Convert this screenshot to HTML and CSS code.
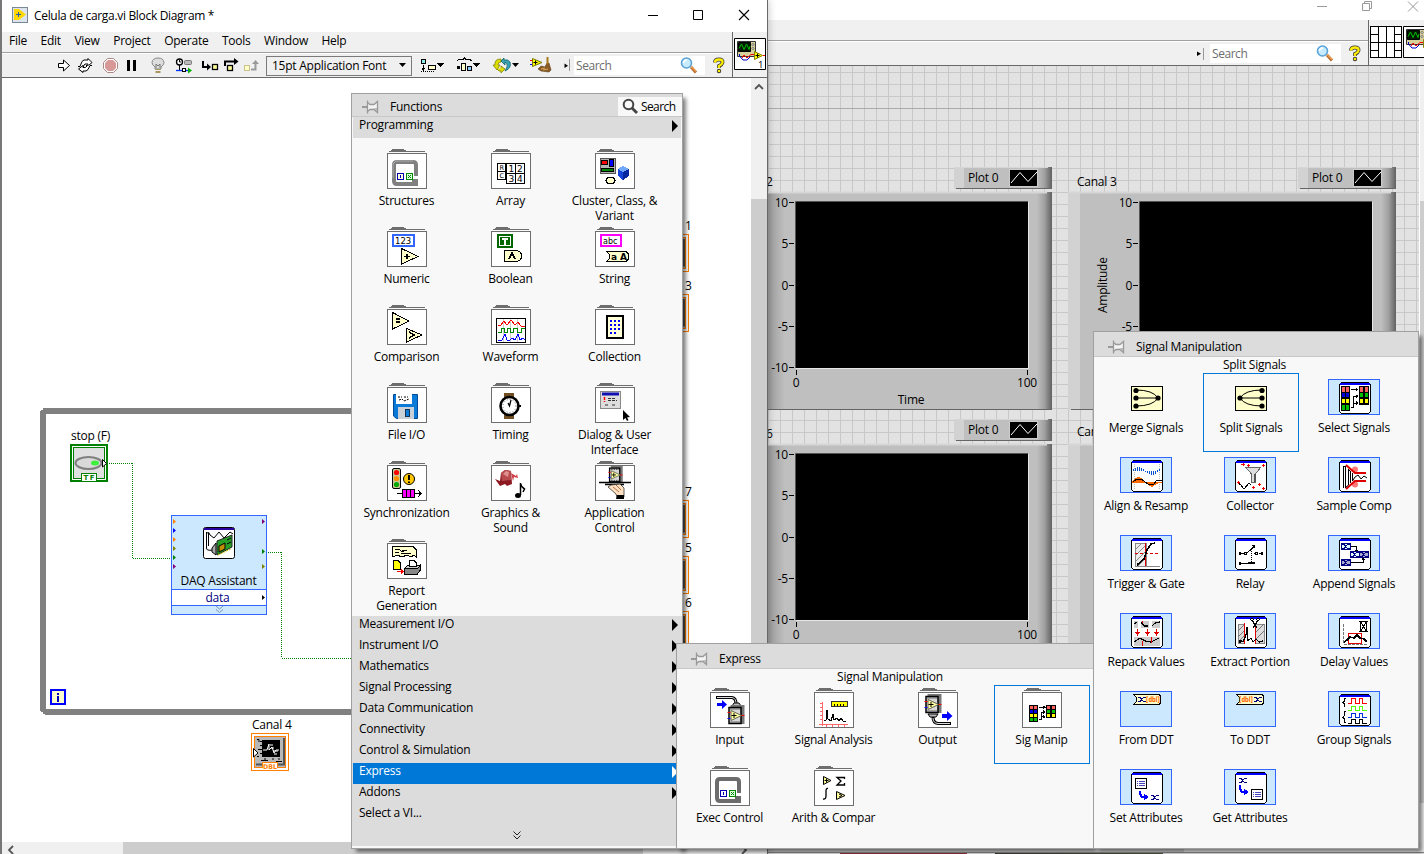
FILE: index.html
```html
<!DOCTYPE html>
<html lang="en">
<head>
<meta charset="utf-8">
<title>Celula de carga.vi Block Diagram</title>
<link rel="stylesheet" href="styles.css">
</head>
<body>
<svg class="defs" width="0" height="0">
  <defs>
    <linearGradient id="bevel" x1="0" x2="1" y1="0" y2="0"><stop offset="0" stop-color="#bfbfbf"/><stop offset=".5" stop-color="#a0a0a0"/><stop offset="1" stop-color="#606060"/></linearGradient>
    <symbol id="folder" viewBox="0 0 40 40"><path d="M4 2V1H5V0H17V1H19V2H38V3H2V2Z" fill="#6e6e6e"/><rect x=".5" y="4.500" width="39" height="35" fill="#fff" stroke="#6e6e6e"/></symbol>
    <symbol id="expframe" viewBox="0 0 52 36"><rect x=".5" y=".5" width="51" height="35" fill="#cce8ff" stroke="#3366ff"/></symbol>
    <symbol id="exp" viewBox="0 0 52 36"><rect x=".5" y=".5" width="51" height="35" fill="#cce8ff" stroke="#3366ff"/><path d="M13 3H41V4H42V5H43V33H42V34H41V35H13V34H12V33H11V5H12V4H13Z" fill="#000"/><path d="M12 6H42V33H41V34H13V33H12Z" fill="#fff"/><rect x="12" y="4" width="30" height="2" fill="#00f"/></symbol>
    <symbol id="pin" viewBox="0 0 17 14"><path d="M0 7H5" stroke="#999" stroke-width="2"/><path d="M5.500 .5V13.500M5.500 2.500L8 4.500H12L15.500 1.500V12.500L12 9.500H8L5.500 11.500" fill="#f4f4f4" stroke="#999" stroke-width="1.300"/><path d="M8 8.500H12L15 11V8Z" fill="#b5b5b5"/></symbol>
    <symbol id="vi" viewBox="0 0 32 32"><g stroke-linejoin="bevel"><rect x=".5" y=".5" width="31" height="31" fill="#fff" stroke="#000"/><path d="M3.500 3.500H21.500V18.500H3.500Z" fill="#d6d09c" stroke="#333"/><rect x="4.500" y="4.500" width="12" height="9" fill="#001800" stroke="#000"/><path d="M5 10.500L7.500 6L10 11.500L12.500 6L15 11.500L16 8" fill="none" stroke="#00c000"/><circle cx="19" cy="6.500" r="1" fill="#fff" stroke="#333" stroke-width=".6"/><circle cx="19" cy="10.500" r="1" fill="#fff" stroke="#333" stroke-width=".6"/><path d="M5.500 16V18L9 22H13L16 19" fill="none" stroke="#0000c0"/><path d="M8 20L10 17L13 20L17 16.500H20" fill="none" stroke="#f00"/><path d="M20.500 13.500L28.500 17.500L20.500 21.500Z" fill="#ff0" stroke="#8a8000"/><path d="M23.500 15.500V19.500M21.500 17.500H25.500" stroke="#000"/><path d="M29 17.500H31" stroke="#f00"/></g></symbol>
    <symbol id="mag" viewBox="0 0 18 18"><path d="M11 10L16 15.500" stroke="#b46a30" stroke-width="3"/><path d="M11 9.500L16 14.500" stroke="#f0a050" stroke-width="1.200"/><circle cx="6.500" cy="6" r="5" fill="#c8ecff" stroke="#5aa2d6" stroke-width="1.600"/><path d="M3.500 6Q4 3 7 3" fill="none" stroke="#fff" stroke-width="1.500"/></symbol>
    <symbol id="loop" viewBox="0 0 26 26"><path d="M24 16V5Q24 2 21 2H5Q2 2 2 5V21Q2 24 5 24H24V21H20" fill="none" stroke="#808080" stroke-width="4"/><path d="M1 18V4L4 1H21" fill="none" stroke="#aaa"/><rect x="5.500" y="13.500" width="6" height="6" fill="#ffd" stroke="#0000b0"/><path d="M8.500 15V18" stroke="#0000b0"/><rect x="14.500" y="13.500" width="6" height="6" fill="#dfd" stroke="#080"/><path d="M16 15L19 18M19 15L16 18" stroke="#080"/></symbol>
    <symbol id="loop-flat" viewBox="0 0 26 26"><path d="M24 16V5Q24 2 21 2H5Q2 2 2 5V21Q2 24 5 24H24V21H20" fill="none" stroke="#6c6c6c" stroke-width="4"/><rect x="5.500" y="13.500" width="6" height="6" fill="#fff" stroke="#0000b0"/><path d="M8.500 15V18" stroke="#0000b0"/><rect x="14.500" y="13.500" width="6" height="6" fill="#dfd" stroke="#080"/><path d="M16 15L19 18M19 15L16 18" stroke="#080"/></symbol>
    <symbol id="ctl" viewBox="0 0 17 20"><rect x="3" y="0" width="14" height="19" fill="#777"/><rect x="1.500" y="2.500" width="12" height="16" fill="#d7d7d7" stroke="#000" stroke-width="1.500"/><path d="M3 4H13M3 17H13" stroke="#000" stroke-dasharray="1 1"/><path d="M3.500 5.500L14 10.500L3.500 15.500Z" fill="#ffffa0" stroke="#665"/><path d="M6.500 8V13M4 10.500H9" stroke="#000"/><path d="M0 7.500H3M14 10.500H17" stroke="#f00"/><path d="M0 13.500H3" stroke="#00f"/></symbol>
    <symbol id="swatches" viewBox="0 0 28 18" preserveAspectRatio="none"><path d="M0 0H9V18H0ZM18 0H28V14H18Z" fill="#000"/><path d="M1 1H4V4H1ZM5 1H8V4H5ZM19 1H22V4H19ZM24 1H27V4H24Z" fill="#ff6060"/><path d="M1 5H4V8H1ZM5 5H8V8H5Z" fill="#00d"/><path d="M1 9.500H4V12.500H1ZM5 9.500H8V12.500H5ZM19 9.500H22V12.500H19ZM24 9.500H27V12.500H24Z" fill="#ff0"/><path d="M1 14H4V17H1ZM5 14H8V17H5ZM19 5H22V8H19ZM24 5H27V8H24Z" fill="#00c000"/><path d="M10 2.500H15M10 15.500H12.500V7.500H15M12.500 12.500H15" fill="none" stroke="#000"/><path d="M15 .8L17.500 2.500L15 4.200ZM15 5.800L17.500 7.500L15 9.200ZM15 10.800L17.500 12.500L15 14.200Z"/></symbol>
    <symbol id="xx" viewBox="0 0 8 5"><path d="M0 .5H2L5.500 4.500H8M0 4.500H2L5.500 .5H8" stroke="#000080" fill="none"/></symbol>
    <symbol id="dbl" viewBox="0 0 38 38"><rect width="38" height="38" fill="#fff"/><rect x=".5" y=".5" width="37" height="37" fill="none" stroke="#ff8000"/><rect x="3.500" y="3.500" width="31" height="31" fill="#b8b8b8" stroke="#ff8000"/><path d="M33 5V31.500H5" fill="none" stroke="#555" stroke-width="2"/><rect x="11" y="7" width="18" height="17" fill="#000"/><path d="M12 17H16L18 11V17L21 14L23 20L25 17H28M19 12H22M20 15H23M23 21H26M22 18H27" fill="none" stroke="#fff" stroke-linejoin="bevel"/><path d="M6 6.500H8V9M9 8.500H11M9 12.500H11M7 16.500H11M6 23.500H8M9 20.500H11M10 27.500H17M14 25V27M22 25V27M25 28.500H31M28 25V27" stroke="#000" fill="none"/><path d="M2.500 15.500L7 20L2.500 24Z" fill="#fff" stroke="#000"/><path d="M11.500 36V29.500H26.500V36Z" fill="#fff"/><path d="M11.500 35V29.500H26.500V35" fill="none" stroke="#ff8000"/><text x="12" y="36.300" class="micro" font-size="6.500" fill="#ff8000" font-weight="700" textLength="14" lengthAdjust="spacingAndGlyphs">DBL</text></symbol>
  </defs>
</svg>

<!-- Front panel window -->
<section class="win front">
  <header class="front-title">
    <svg width="110" height="20" viewBox="1314 0 110 20"><path d="M1317 6.500H1327M1362.500 3.500H1369.500V10.500H1362.500ZM1364.500 3V1.500H1371.500V8.500H1370M1408 1.500L1418 11.500M1418 1.500L1408 11.500" fill="none" stroke="#999"/></svg>
  </header>
  <div class="front-bars">
    <div class="bars-main">
      <div class="front-menu"></div>
      <div class="front-tools">
        <svg width="15" height="22" viewBox="0 0 15 22"><path d="M2 8.500V13L6 10.700Z"/><path d="M8.500 5V17" stroke="#999"/></svg>
        <div class="search"><span>Search</span><svg width="18" height="18"><use href="#mag"/></svg></div>
        <svg width="27" height="22" viewBox="705 55 27 22"><use href="#help-mark"/></svg>
      </div>
    </div>
    <div class="front-icons">
      <svg width="32" height="32" class="px"><path d="M.5.5H31.500V31.500H.5ZM8.500 0V32M16.500 0V32M24.500 0V32M0 16.500H32M0 8.500H8M24 8.500H32M0 24.500H8M24 24.500H32" fill="#fff" stroke="#000"/></svg>
      <svg width="32" height="32"><use href="#vi"/></svg>
    </div>
  </div>
  <svg class="panel" width="657" height="776" viewBox="767 66 657 776">
    <defs>
      <pattern id="grid" width="12" height="12" patternUnits="userSpaceOnUse"><rect width="12" height="12" fill="#e2e2e2"/><path d="M.5 0V12M0 .5H12" stroke="#c8c8c8"/></pattern>
      <g id="legend"><rect width="98" height="22" fill="#bfbfbf"/><rect width="10" height="22" fill="#d2d2d2"/><rect x="83" width="15" height="22" fill="url(#bevel)"/><path d="M2 21.500H98M97.500 0V22" stroke="#666"/><path d="M0 .5H94" stroke="#d6d6d6"/><rect x="55.500" y="2.500" width="28" height="17" fill="#000" stroke="#ccc"/><path d="M57 16L66 5.500L74 14.500L83 5" fill="none" stroke="#fff"/><text x="14" y="15">Plot 0</text></g>
      <g id="chart"><rect width="232" height="166" fill="#000"/><path d="M-.5 166V-.5H232" fill="none" stroke="#555"/><path d="M0 166.500H232.500V0" fill="none" stroke="#e6e6e6"/><path d="M-7 .5H-2M-7 41.500H-2M-7 83.500H-2M-7 124.500H-2M-7 165.500H-2M.5 168V173M231.500 168V173" stroke="#000"/>
        <g text-anchor="end"><text x="-8" y="5">10</text><text x="-8" y="46">5</text><text x="-8" y="88">0</text><text x="-8" y="129">-5</text><text x="-8" y="170">-10</text></g><g text-anchor="middle"><text x="0" y="185">0</text><text x="231" y="185">100</text><text x="115" y="202">Time</text></g></g>
      <g id="left-graph"><rect width="285" height="218" fill="#bfbfbf"/><rect width="18" height="218" fill="url(#leftshade)"/><rect x="270" width="15" height="218" fill="url(#bevel)"/><path d="M0 .5H280" stroke="#d6d6d6" stroke-width="2"/><path d="M0 217.500H285M284.500 0V218" stroke="#666"/></g>
      <g id="right-graph"><rect width="328" height="218" fill="#bfbfbf"/><rect width="12" height="218" fill="#d2d2d2"/><rect x="313" width="15" height="218" fill="url(#bevel)"/><path d="M0 .5H323" stroke="#d6d6d6" stroke-width="2"/><path d="M3 217.500H328M327.500 0V218" stroke="#666"/></g>
      <linearGradient id="leftshade"><stop offset="0" stop-color="#999"/><stop offset="1" stop-color="#bfbfbf"/></linearGradient>
    </defs>
    <rect x="767" y="66" width="652" height="776" fill="url(#grid)"/>
    <path d="M767 108.500H1419" stroke="#aaa"/>
    <rect x="1419" y="66" width="5" height="776" fill="#f0f0f0"/><path d="M1419.500 66V842" stroke="#fff"/><rect x="1420" y="201" width="4" height="602" fill="#cdcdcd"/>
    <use href="#left-graph" x="767" y="192"/><use href="#left-graph" x="767" y="444"/>
    <use href="#right-graph" x="1068" y="192"/><use href="#right-graph" x="1068" y="444"/>
    <use href="#legend" x="954" y="167"/><use href="#legend" x="954" y="419"/><use href="#legend" x="1298" y="167"/>
    <use href="#chart" x="796" y="202"/><use href="#chart" x="796" y="454"/><use href="#chart" x="1140" y="202"/>
    <text x="766" y="186">2</text><text x="766" y="438">6</text>
    <text x="1077" y="186">Canal 3</text><text x="1077" y="436">Can</text>
    <text transform="translate(1107 313) rotate(-90)">Amplitude</text>
  </svg>
  <div class="front-foot"><i></i></div>
  <div class="under"></div>
</section>

<!-- Block diagram window -->
<section class="win block">
  <header class="title">
    <svg width="16" height="16" viewBox="0 0 16 16"><rect x=".5" y=".5" width="15" height="15" fill="#dbe4ec" stroke="#7b8794"/><path d="M2 2H7L14 7.500L7 13H2Z" fill="#ffd800"/><path d="M6.500 5V10M4 7.500H9" stroke="#2458a8"/></svg>
    <h1>Celula de carga.vi Block Diagram *</h1>
    <svg class="winctl" width="120" height="31" viewBox="640 0 120 31"><path d="M648 15.500H658M693.500 10.500H702.500V19.500H693.500Z" fill="none" stroke="#000"/><path d="M739 10L749 20M749 10L739 20" stroke="#000" stroke-width="1.100"/></svg>
  </header>
  <div class="bars">
    <div class="bars-main">
      <nav class="menu"><span>File</span><span>Edit</span><span>View</span><span>Project</span><span>Operate</span><span>Tools</span><span>Window</span><span>Help</span></nav>
      <div class="tools">
        <svg width="20" height="23" viewBox="54 54 20 23"><path d="M58.500 63.500H63.500V60L69.500 65.500L63.500 71V67.500H58.500Z" fill="#fff" stroke="#000"/></svg>
        <svg width="24" height="23" viewBox="74 54 24 23"><path d="M78 66.500H80L82 61.500L84 60H88V58.500L92 62.500L88 66V64H85L83 66.500H84" fill="#fff" stroke="#000" stroke-linejoin="bevel"/><path d="M92 65.500H90L88 69.500L86 71H83V72.500L78.500 69L83 65.500V67.500H85.500L87.500 65.500H86" fill="#fff" stroke="#000" stroke-linejoin="bevel"/></svg>
        <svg width="24" height="23" viewBox="98 54 24 23"><path d="M107.500 58.500H113.500L117.500 62.500V68.500L113.500 72.500H107.500L103.500 68.500V62.500Z" fill="#fff" stroke="#a88"/><path d="M108 60H113L116 63V68L113 71H108L105 68V63Z" fill="#d89898"/></svg>
        <svg width="20" height="23" viewBox="122 54 20 23"><path d="M127 60H130V71H127ZM133 60H136V71H133Z"/></svg>
        <svg width="28" height="23" viewBox="142 54 28 23"><path d="M155 67Q152 65 152 62.500Q152.500 58 158 58Q163.500 58 164 62.500Q164 65 161 67V69H155Z" fill="#ddd" stroke="#888"/><path d="M156 68V64L158 66L160 64V68" fill="none" stroke="#777"/><path d="M155.500 69H160.500V73H155.500Z" fill="#a89860"/><path d="M155 70.500H161" stroke="#eee"/></svg>
        <svg width="26" height="23" viewBox="170 54 26 23"><circle cx="179.500" cy="62" r="3" fill="#fff" stroke="#000" stroke-width="1.300"/><path d="M179.500 60V62H181M179.500 65V70" fill="none" stroke="#000"/><rect x="184.500" y="60.500" width="7" height="4" rx="1" fill="#bbb" stroke="#777"/><path d="M176 70.500H190" stroke="#03f" stroke-width="1.300"/><rect x="182.500" y="68.500" width="3" height="3" fill="#fff" stroke="#000"/><path d="M188 67.500L192 70.500L188 73.500Z" fill="#00b000"/></svg>
        <svg width="25" height="23" viewBox="196 54 25 23"><path d="M203 61V67H208" fill="none" stroke="#000" stroke-width="2"/><path d="M207 63.500L211 67L207 70.500Z"/><rect x="212.500" y="64.500" width="5" height="5" fill="#ff9" stroke="#000" stroke-width="1.300"/></svg>
        <svg width="21" height="23" viewBox="221 54 21 23"><path d="M225 66V61.500H235" fill="none" stroke="#000" stroke-width="2"/><path d="M234 58L238.500 61.500L234 65Z"/><rect x="227.500" y="65.500" width="5" height="5" fill="#ff9" stroke="#000" stroke-width="1.300"/></svg>
        <svg width="24" height="23" viewBox="242 54 24 23"><rect x="244.500" y="65.500" width="5" height="5" fill="#ffffc8" stroke="#ccc18e"/><path d="M251 69.500H255.500V63" fill="none" stroke="#999" stroke-width="2"/><path d="M252 64L255.500 60L259 64Z" fill="#999"/></svg>
        <div class="combo"><span>15pt Application Font</span><svg width="9" height="5"><path d="M1 0H8L4.500 4Z"/></svg></div>
        <svg width="38" height="23" viewBox="412 54 38 23" class="px"><rect x="421.500" y="59.500" width="4" height="4" fill="#8ee" stroke="#000"/><path d="M423.500 65V71M422 68L423.500 70L425 68" fill="none" stroke="#000"/><path d="M421 71.500H435" stroke="#000" stroke-dasharray="1 1"/><rect x="428.500" y="65.500" width="7" height="4" fill="#ffc" stroke="#000"/><path d="M437 63H444L440.500 67Z"/></svg>
        <svg width="36" height="23" viewBox="450 54 36 23" class="px"><path d="M457 61L459 59.500H463L464.500 58L466 59.500H470L472 61" fill="none" stroke="#000"/><path d="M457 66H460V69H457Z"/><rect x="461.500" y="63.500" width="4" height="7" fill="#ffc" stroke="#000"/><rect x="467.500" y="66.500" width="4" height="4" fill="#8cf" stroke="#000"/><path d="M473 63H480L476.500 67Z"/></svg>
        <svg width="38" height="23" viewBox="486 54 38 23"><path d="M501 59Q494 59 495 65L493 65L497 70L500 65H498Q498 62 501 62Z" fill="#dd0" stroke="#770" stroke-width=".7"/><path d="M497 69Q499 72 501 71V73L505 69L501 66V68" fill="#dd0" stroke="#770" stroke-width=".7"/><path d="M504 58L501 61L505 65V62Q508 63 507 67L505 71Q512 68 510 62Q508 59 504 60Z" fill="#3aa6b8" stroke="#055" stroke-width=".7"/><path d="M512 63H519L515.500 67Z"/></svg>
        <svg width="32" height="23" viewBox="524 54 32 23"><path d="M530 60.500H534" stroke="#f00"/><path d="M530 64.500H534" stroke="#00f"/><path d="M538 69L541 66L545 67L547 63H549L551 70L549 72L541 71Z" fill="#8a5c24" stroke="#5b3b12" stroke-width=".6"/><path d="M541 69L545 68M543 70L548 69" stroke="#d8a860"/><path d="M547.500 57V64" stroke="#a87818" stroke-width="2"/><path d="M532.500 58.500L542 62.500L532.500 66.500Z" fill="#ff0" stroke="#770"/><path d="M535.500 60.500V64.500M533.500 62.500H537.500" stroke="#000"/></svg>
        <svg width="18" height="23" viewBox="556 54 18 23"><path d="M564.500 63.500V68L568 65.700Z"/><path d="M569.500 59V71" stroke="#999"/></svg>
        <div class="search"><span>Search</span><svg width="18" height="18"><use href="#mag"/></svg></div>
        <svg width="27" height="23" viewBox="705 54 27 23"><g id="help-mark"><path d="M715 62.500Q715 59.500 719 59.500Q723 59.500 722.500 62.500Q722 64.500 719 66V68" fill="none" stroke="#333" stroke-width="3.800"/><circle cx="719" cy="71" r="2.200" fill="#333"/><path d="M715 62.500Q715 59.500 719 59.500Q723 59.500 722.500 62.500Q722 64.500 719 66V68" fill="none" stroke="#ffee00" stroke-width="2.400"/><circle cx="719" cy="71" r="1.300" fill="#ffee00"/></g></svg>
      </div>
    </div>
    <div class="vi-icon"><svg width="32" height="32"><use href="#vi"/><text x="24" y="29.500" font-size="9.500">1</text></svg></div>
  </div>
  <div class="work">
    <svg class="diagram" width="749" height="764" viewBox="2 78 749 764">
      <path d="M43 411H640M43 410V712M43 712H640" fill="none" stroke="#808080" stroke-width="6"/>
      <path d="M40 408H43V409H41V411H40ZM40 715H45V714H42V713H41V711H40Z" fill="#fff"/>
      <text x="71" y="440">stop (F)</text>
      <g class="px"><rect x="71" y="445" width="36" height="36" fill="#fff" stroke="#008000" stroke-width="2"/><rect x="73.500" y="447.500" width="31" height="31" fill="#e0e0e0" stroke="#008000"/></g>
      <ellipse cx="88.500" cy="463" rx="13" ry="6" fill="#d9d9d9" stroke="#808080" stroke-width="2"/><ellipse cx="95" cy="463" rx="4" ry="2.500" fill="#3cf03c"/><path d="M102.500 459.500L106.500 463.500L102.500 467Z" fill="#fff" stroke="#000"/>
      <rect x="81.500" y="473.500" width="15" height="8" fill="#fff" stroke="#008000"/><text x="83.500" y="480" class="micro" font-size="7" fill="#008000" font-weight="700" textLength="11">TF</text>
      <g class="px" fill="none" stroke="#008000" stroke-dasharray="1 1"><path d="M109 463.500H132M132.500 463V558M133 558.500H171M268 552.500H281M281.500 552V658M282 658.500H351"/></g>
      <g class="px"><rect x="171.500" y="515.500" width="95" height="99" fill="#cce8ff" stroke="#3366ff"/><rect x="171.500" y="589.500" width="95" height="16" fill="#fff" stroke="#3366ff"/></g>
      <path d="M173 519V524L176 521.500Z M173 537V542L176 539.500Z" fill="#ff8000"/><path d="M173 528V533L176 530.500Z" fill="#00f"/><path d="M173 546V551L176 548.500ZM262 564V569L265 566.500Z" fill="#808000"/><path d="M173 555V560L176 557.500ZM262 549V554L265 551.500Z" fill="#008000"/><path d="M173 564V569L176 566.500ZM262 519V524L265 521.500Z" fill="#800080"/><path d="M262 595V600L265 597.500Z"/>
      <rect x="203.500" y="527.500" width="31" height="31" rx="2" fill="#fff" stroke="#000"/><rect x="204" y="528" width="30" height="2" fill="#2a00a0"/><path d="M206.500 532V548Q206 551 213 550M208.500 533V546" fill="none" stroke="#000"/><path d="M207 533Q209 531 210 535L214 538L219 532L224 538L230 532L233 534" fill="none" stroke="#000"/><path d="M217 541L232 535V547L217 555Z" fill="#28a028" stroke="#222"/><path d="M212 548L216 543V555L212 552Z" fill="#aaa" stroke="#000"/><path d="M219 546L225 543V549L219 552Z" fill="#c09000" stroke="#000"/><path d="M227 540L231 538M227 544L231 542" stroke="#000"/><path d="M218 555L231 549" stroke="#cc0" stroke-dasharray="2 1"/>
      <g text-anchor="middle"><text x="218.500" y="585">DAQ Assistant</text><text x="217.500" y="602" fill="#000080">data</text></g>
      <path d="M216 606L219.500 609L223 606M216 609.500L219.500 612.500L223 609.500" fill="none" stroke="#7b95b4"/>
      <rect x="51" y="690" width="14" height="14" fill="#ffc" stroke="#00f" stroke-width="2"/><path d="M57 693H59V695H57ZM57 696H59V702H57Z" fill="#0000c0"/>
      <text x="252" y="729">Canal 4</text>
      <use href="#dbl" x="251" y="733" width="38" height="38"/>
      <g><use href="#dbl" x="651" y="234" width="38" height="38"/><use href="#dbl" x="651" y="294" width="38" height="38"/><use href="#dbl" x="651" y="500" width="38" height="38"/><use href="#dbl" x="651" y="556" width="38" height="38"/><use href="#dbl" x="651" y="611" width="38" height="38"/></g>
      <text x="685" y="230">1</text><text x="685" y="290">3</text><text x="685" y="496">7</text><text x="685" y="552">5</text><text x="685" y="607">6</text>
    </svg>
    <div class="vscroll"><svg width="16" height="18"><path d="M4 11L8 7L12 11" fill="none" stroke="#555" stroke-width="1.800"/></svg><i></i></div>
  </div>
  <div class="hscroll"><svg width="121" height="12"><path d="M11 4L7 8L11 12" fill="none" stroke="#555" stroke-width="1.800"/></svg><i></i><svg width="124" height="12"><path d="M99 4L103 8L99 12" fill="none" stroke="#555" stroke-width="1.800"/></svg></div>
</section>

<!-- Functions palette -->
<section class="pal functions">
  <header><svg width="17" height="14"><use href="#pin"/></svg><span>Functions</span><button><svg width="17" height="17" viewBox="0 0 17 17"><circle cx="6.500" cy="6.500" r="4.800" fill="none" stroke="#444" stroke-width="2"/><path d="M10 10L15 15" stroke="#444" stroke-width="2.800"/></svg>Search</button></header>
  <div class="cat"><span>Programming</span><i></i></div>
  <div class="tiles">
    <div class="tile"><svg width="40" height="40"><use href="#folder"/><use href="#loop" x="5" y="11" width="26" height="26"/></svg><span>Structures</span></div>
    <div class="tile"><svg width="40" height="40" class="px"><use href="#folder"/><path d="M6.500 14.500H14.500V30.500H6.500ZM6 22.500H14M15.500 14.500H33.500V34.500H15.500ZM24.500 14V34M15 24.500H33" fill="#fff" stroke="#000"/><g class="micro"><text x="8.500" y="21" font-size="6.500">R</text><text x="8.500" y="29" font-size="6.500">C</text><text x="17.500" y="23" font-size="9">1</text><text x="26" y="23" font-size="9">2</text><text x="17.500" y="33" font-size="9">3</text><text x="26" y="33" font-size="9">4</text></g></svg><span>Array</span></div>
    <div class="tile"><svg width="40" height="40" class="px"><use href="#folder"/><rect x="5.500" y="9.500" width="15" height="15" fill="#b4b4b4" stroke="#555"/><rect x="6.500" y="11.500" width="6" height="4" fill="#f00" stroke="#000"/><rect x="14.500" y="10.500" width="4" height="7" fill="#00f" stroke="#000"/><rect x="6.500" y="19.500" width="12" height="3" fill="#080" stroke="#000"/><path d="M23 20L28 17L34 20V27L28 31L23 27Z" fill="#1745d8"/><path d="M23 20L28 17L34 20L28 23Z" fill="#70a8ff"/><path d="M28 23L34 20V27L28 31Z" fill="#0828a0"/><path d="M10 31.500H21" stroke="#000"/><path d="M13 28.500H18L19.500 30V33L18 34.500H13L11.500 33V30Z" fill="#ffc" stroke="#000"/></svg><span>Cluster, Class, &amp;<br>Variant</span></div>

    <div class="tile"><svg width="40" height="40" class="px"><use href="#folder"/><rect x="6" y="8" width="21" height="11" fill="#fff" stroke="#36f" stroke-width="2"/><text class="micro" x="8" y="17" font-size="8.500" letter-spacing=".5">123</text><path d="M14.500 21.500L31 29.500L14.500 37Z" fill="#ffc" stroke="#000"/><path d="M20 27V32M17 29.500H23" stroke="#000" stroke-width="1.500"/></svg><span>Numeric</span></div>
    <div class="tile"><svg width="40" height="40" class="px"><use href="#folder"/><rect x="6" y="7" width="16" height="14" fill="#060"/><rect x="8.500" y="9.500" width="11" height="9" fill="#060" stroke="#fff"/><path d="M11 12H17M14 12V18" stroke="#fff" stroke-width="2"/><path d="M13.500 23.500H25Q30.500 24 30.500 29Q30.500 34 25 34.500H13.500Z" fill="#ffc" stroke="#000"/><path d="M18 32L21 26L24 32" fill="none" stroke="#000" stroke-width="1.700"/></svg><span>Boolean</span></div>
    <div class="tile"><svg width="40" height="40" class="px"><use href="#folder"/><rect x="6" y="8" width="20" height="11" fill="#fff" stroke="#f0f" stroke-width="2"/><text class="micro" x="8" y="17" font-size="8">abc</text><path d="M12 24.500H31L33.500 27V32L31 34.500H12L14 32V27Z" fill="#ffc" stroke="#000"/><text class="micro" x="16" y="33" font-size="9" font-weight="700" textLength="16">aA</text></svg><span>String</span></div>

    <div class="tile"><svg width="40" height="40" class="px"><use href="#folder"/><path d="M5.500 7.500L22 16L5.500 24Z" fill="#ffc" stroke="#000"/><path d="M9 14H13M9 17H13" stroke="#000" stroke-width="1.500"/><path d="M19.500 23.500L35 30L19.500 37Z" fill="#ffc" stroke="#000"/><path d="M22 27L27 30L22 33" fill="none" stroke="#000" stroke-width="1.500"/></svg><span>Comparison</span></div>
    <div class="tile"><svg width="40" height="40" class="px"><use href="#folder"/><rect x="5.500" y="13.500" width="29" height="24" fill="#fff" stroke="#000"/><path d="M12.500 14V37M19.500 14V37M26.500 14V37" stroke="#ccc"/><path d="M7 21L10 20L13 16L16 20L20 15L24 20L27 17L30 21H34" fill="none" stroke="#f00"/><path d="M7 27.500H10V23.500H13V27.500H16V23.500H19V27.500H22V23.500H26V27.500H30V23.500H34" fill="none" stroke="#080"/><path d="M7 35H11L13 31L14 29L16 35H19L21 33L24 35L27 29L29 35L32 33L34 35" fill="none" stroke="#00f" stroke-linejoin="bevel"/></svg><span>Waveform</span></div>
    <div class="tile"><svg width="40" height="40" class="px"><use href="#folder"/><rect x="12" y="11" width="16" height="22" fill="#ffffd8" stroke="#000" stroke-width="2"/><path d="M16 15V30M20 15V30M24 15V26" stroke="#00f" stroke-width="2" stroke-dasharray="2 2"/></svg><span>Collection</span></div>

    <div class="tile"><svg width="40" height="40"><use href="#folder"/><path d="M6.500 11.500H30.500V35.500H9.500L6.500 33Z" fill="#0a7ad8" stroke="#004a98"/><rect x="9" y="11" width="16" height="10" fill="#fff"/><path d="M11 14H15M17 14H21M12 17L15 16L17 18L22 16" stroke="#000" stroke-dasharray="2 1" fill="none"/><rect x="11" y="24" width="16" height="12" fill="#c9d0d8"/><rect x="18.500" y="26.500" width="4" height="7" fill="#0a7ad8" stroke="#135"/></svg><span>File I/O</span></div>
    <div class="tile"><svg width="40" height="40"><use href="#folder"/><path d="M13 10H23V36H13Z" fill="#704d22"/><circle cx="18.500" cy="23" r="9" fill="#fff" stroke="#000" stroke-width="2.600"/><circle cx="18.500" cy="23" r="6.500" fill="none" stroke="#777" stroke-dasharray="1 2"/><path d="M20 17L18.500 23L17 20" fill="none" stroke="#000" stroke-width="1.300"/><path d="M28 23H30" stroke="#000" stroke-width="2"/></svg><span>Timing</span></div>
    <div class="tile"><svg width="40" height="40"><use href="#folder"/><rect x="5.500" y="8.500" width="20" height="17" fill="#ddd" stroke="#888"/><path d="M7 11H24" stroke="#1010b0" stroke-width="3"/><path d="M9.500 14V17M9.500 18V19" stroke="#f00" stroke-width="1.500"/><path d="M13 15.500H21M13 17.500H22M10 22H14M17 22H21" stroke="#333" stroke-dasharray="3 1"/><path d="M28 27V37L30.500 35L32 38L33.500 37L32 34.500L35 34Z"/></svg><span>Dialog &amp; User<br>Interface</span></div>

    <div class="tile"><svg width="40" height="40"><use href="#folder"/><rect x="5.500" y="7.500" width="8" height="20" rx="1.500" fill="#c8c896" stroke="#000"/><circle cx="9.500" cy="11.500" r="2.600" fill="#f00"/><circle cx="9.500" cy="17.500" r="2.600" fill="#ff9000"/><circle cx="9.500" cy="23.500" r="2.600" fill="#00a800"/><circle cx="22" cy="18" r="5.500" fill="#ffc800" stroke="#000"/><path d="M22 14V19M22 20.500V22" stroke="#000" stroke-width="2"/><g class="px"><path d="M10 32.500H34M31 29L34 32.500L31 36" fill="none" stroke="#000"/><rect x="15.500" y="28.500" width="12" height="8" fill="#f0f" stroke="#000"/><path d="M19.500 28V37M23.500 28V37" stroke="#000"/></g></svg><span>Synchronization</span></div>
    <div class="tile"><svg width="40" height="40"><use href="#folder"/><path d="M4 18L9 20L10 12L14 9L20 10L21 23L16 25L14 23L9 25Z" fill="#8c1820"/><path d="M10 12L14 9L20 10L20 19L11 20Z" fill="#b84a4e"/><path d="M12 13L15 10L18 11L17 16Z" fill="#e09090"/><path d="M20 12L25 15L26 13L27 17L23 16L22 20Z" fill="#d04048"/><path d="M29.500 34V22Q30 26 33.500 28L32 31" fill="none" stroke="#000" stroke-width="1.500"/><ellipse cx="27" cy="34.500" rx="3" ry="2.500"/></svg><span>Graphics &amp;<br>Sound</span></div>
    <div class="tile"><svg width="40" height="40"><use href="#folder"/><use href="#ctl" x="12" y="5" width="17" height="17"/><path d="M4 21.500H36M10 23.500H29" stroke="#000" stroke-width="1.300"/><path d="M16 24L13 26L21 33L22 36H29V27L25 23Z" fill="#ffe0c0" stroke="#333" stroke-width=".8"/><path d="M21 24L26 29M18 26L24 31" stroke="#a05030" stroke-width=".8"/><path d="M22 34H29V38H21Z"/></svg><span>Application<br>Control</span></div>

    <div class="tile"><svg width="40" height="40" class="px"><use href="#folder"/><path d="M5.500 7.500H26L29.500 11V18L27 16.500L24 17.500L20 16.500L15 17.500L10 16.500L5.500 17.500Z" fill="#ffc" stroke="#000"/><path d="M8 10.500H13M8 13.500H12M13 11.500L17 13M15 11.500H20M14 14.500H24" stroke="#000"/><path d="M6.500 21.500H11L13.500 24V30H6.500Z" fill="#ff0" stroke="#000"/><path d="M10 32.500H16M14 30.500L16 32.500L14 34.500" fill="none" stroke="#f00"/><path d="M17.500 29.500H30L33.500 26V31L30 35.500H17.500Z" fill="#888" stroke="#000"/><path d="M17.500 29.500L21 26H34L30 30Z" fill="#ccc" stroke="#000"/><path d="M22.500 27V21.500H27L29.500 24V27Z" fill="#fff" stroke="#000"/></svg><span>Report<br>Generation</span></div>
  </div>
  <div class="cats">
    <div class="cat"><span>Measurement I/O</span><i></i></div><div class="cat"><span>Instrument I/O</span><i></i></div><div class="cat"><span>Mathematics</span><i></i></div><div class="cat"><span>Signal Processing</span><i></i></div><div class="cat"><span>Data Communication</span><i></i></div><div class="cat"><span>Connectivity</span><i></i></div><div class="cat"><span>Control &amp; Simulation</span><i></i></div><div class="cat on"><span>Express</span><i></i></div><div class="cat"><span>Addons</span><i></i></div><div class="cat"><span>Select a VI...</span></div>
    <svg class="more" width="8" height="9"><path d="M.5 .5L4 4L7.500 .5M.5 4.500L4 8L7.500 4.500" fill="none" stroke="#222"/></svg>
  </div>
</section>

<!-- Express palette -->
<section class="pal express">
  <header><svg width="17" height="14"><use href="#pin"/></svg><span>Express</span></header>
  <p class="hint">Signal Manipulation</p>
  <div class="tiles four">
    <div class="tile"><svg width="40" height="40"><use href="#folder"/><path d="M6 9.500H22Q26 10 26 16" fill="none" stroke="#000" stroke-width="3"/><path d="M7 9.500H22Q26 10 26 16" fill="none" stroke="#ddd"/><path d="M22 18L24 15H29L31 18Z" fill="#bbb" stroke="#000"/><path d="M7 15H12V12L17 16.500L12 21V18H7Z" fill="#00f"/><use href="#ctl" x="17" y="17" width="18" height="20"/></svg><span>Input</span></div>
    <div class="tile"><svg width="40" height="40" class="px"><use href="#folder"/><path d="M8.500 14V38M5 36.500H34" stroke="#f66"/><path d="M6 15.500H8M6 19.500H8M6 23.500H8M6 27.500H8M6 31.500H8M12.500 37V39M18.500 37V39M24.500 37V39M30.500 37V39" stroke="#f66"/><rect x="17.500" y="13.500" width="16" height="5" fill="#ff0" stroke="#333"/><path d="M20.500 16V18M23.500 16V18M26.500 16V18M29.500 16V18" stroke="#000"/><path d="M10 33L12 32L13 22L14 31L17 33L19 26L20 32L23 30L25 33L27 30L29 33H32" fill="none" stroke="#000" stroke-linejoin="bevel"/></svg><span>Signal Analysis</span></div>
    <div class="tile"><svg width="40" height="40"><use href="#folder"/><use href="#ctl" x="6" y="6" width="18" height="20"/><path d="M10 26H20L18 29H12Z" fill="#bbb" stroke="#000"/><path d="M15 29Q15 35 20 35.500H33" fill="none" stroke="#000" stroke-width="3"/><path d="M15 30Q15 35 20 35.500H32" fill="none" stroke="#ddd"/><path d="M24 26H29V23L34.500 28L29 33V30H24Z" fill="#00f"/></svg><span>Output</span></div>
    <div class="tile sel"><svg width="40" height="40" class="px"><use href="#folder"/><use href="#swatches" x="7" y="17" width="27" height="17"/></svg><span>Sig Manip</span></div>
    <div class="tile"><svg width="40" height="40"><use href="#folder"/><use href="#loop-flat" x="5" y="11" width="26" height="26"/></svg><span>Exec Control</span></div>
    <div class="tile"><svg width="40" height="40"><use href="#folder"/><path d="M9.500 10.500L17 14.500L9.500 18.500ZM22.500 25.500L31 29.500L22.500 33.500Z" fill="#ff9" stroke="#000"/><path d="M12.500 12.500V16.500M10.500 14.500H14.500M25 28L28 29.500L25 31" fill="none" stroke="#000"/><path d="M30.500 13V11.500H23L27 15L23 19H30.500V17M14 22.500Q12 22 12 25V30Q12 33.500 9 33" fill="none" stroke="#000" stroke-width="1.300"/></svg><span>Arith &amp; Compar</span></div>
  </div>
</section>

<!-- Signal manipulation palette -->
<section class="pal sigman">
  <header><svg width="17" height="14"><use href="#pin"/></svg><span>Signal Manipulation</span></header>
  <p class="hint">Split Signals</p>
  <div class="tiles xp">
    <div class="tile"><svg width="52" height="36"><rect x="11.500" y="7.500" width="31" height="24" fill="#ffc" stroke="#000"/><path d="M16 11Q33 11 38 19Q33 27 16 27M16 19H38" fill="none" stroke="#000"/><circle cx="16" cy="11.500" r="2.600"/><circle cx="16" cy="19" r="2.600"/><circle cx="16" cy="27" r="2.600"/><circle cx="38" cy="19" r="2.600"/></svg><span>Merge Signals</span></div>
    <div class="tile sel"><svg width="52" height="36"><rect x="11.500" y="7.500" width="31" height="24" fill="#ffc" stroke="#000"/><path d="M38 11Q21 11 16 19Q21 27 38 27M38 19H16" fill="none" stroke="#000"/><circle cx="38" cy="11.500" r="2.600"/><circle cx="38" cy="19" r="2.600"/><circle cx="38" cy="27" r="2.600"/><circle cx="16" cy="19" r="2.600"/></svg><span>Split Signals</span></div>
    <div class="tile"><svg width="52" height="36" class="px"><use href="#exp"/><use href="#swatches" x="13" y="7" width="28" height="25"/></svg><span>Select Signals</span></div>

    <div class="tile"><svg width="52" height="36" class="px"><use href="#exp"/><path d="M14.500 7V33M39.500 7V33" stroke="#bbb" stroke-dasharray="1 1"/><path d="M13.500 12V14M15.500 11V14M17.500 10V14M19.500 10V14M21.500 11V14M23.500 12V14M25.500 14V15M27.500 14V16M29.500 14V17M31.500 14V18M33.500 14V18M35.500 14V17M37.500 13V15M39.500 12V14" stroke="#0050d0"/><path d="M12 25L15 21L18 20L21 21L25 24.500ZM25 25H41L35 28L32 30L28 28Z" fill="#ff6a00"/><path d="M12 25H42" stroke="#ff6a00"/><path d="M13 25L17 22H21L28 27H34L37 23H42" fill="none" stroke="#000"/></svg><span>Align &amp; Resamp</span></div>
    <div class="tile"><svg width="52" height="36" class="px"><use href="#exp"/><path d="M22 10.500H36.500L31.500 17V25H27.500V17Z" fill="#ddd" stroke="#666"/><path d="M31 17V25" stroke="#555" stroke-width="2"/><path d="M13 25L17 28L20 32L25 26L27 28" fill="none" stroke="#000"/><path d="M17 7.500H21M19.500 6V9M23 8.500H26M24.500 7V10M38 8.500H41M39.500 7V10M34 27.500H37M35.500 26V29M38 31.500H41M39.500 30V33M13 25.500H16M14.500 24V27M28 30.500H31M29.500 29V32" stroke="#e00"/></svg><span>Collector</span></div>
    <div class="tile"><svg width="52" height="36"><use href="#exp"/><circle cx="27" cy="12.500" r="3" fill="#f77"/><circle cx="27" cy="27.500" r="3" fill="#f77"/><path d="M18 8L27 16H38M18 32L27 24H38" fill="none" stroke="#d00" stroke-width="2"/><path d="M15.500 9V31M17.500 9V31M20.500 12V28M22.500 14V26M15.500 9.500H17.500M17.500 30.500L20.500 28M20.500 12.500L22.500 14.500M24.500 16V24L27 20L30 18L33 22L36 19L39 21" fill="none" stroke="#000" stroke-linejoin="bevel"/></svg><span>Sample Comp</span></div>

    <div class="tile"><svg width="52" height="36" class="px"><use href="#exp"/><rect x="15" y="8" width="11" height="23" fill="#eee" stroke="#888"/><path d="M15 15L22 8M15 21L26 10M15 27L26 16M18 31L26 22M15 31.500H40" stroke="#888"/><path d="M25.500 8V31" stroke="#d00" stroke-width="1.300"/><path d="M15 18.500H40" stroke="#d00" stroke-dasharray="3 2"/><path d="M17 30L24 24L27 15L31 9L35 8" fill="none" stroke="#000" stroke-width="1.600"/></svg><span>Trigger &amp; Gate</span></div>
    <div class="tile"><svg width="52" height="36" class="px"><use href="#exp"/><path d="M15 18.500H20M23 18L31 11M35 18.500H38M15 28.500H31" stroke="#000"/><path d="M27.500 16V27" stroke="#000" stroke-dasharray="1 1"/><path d="M27 10H31V14Z"/><circle cx="21.500" cy="18.500" r="1.500" fill="#fff" stroke="#000"/><circle cx="32.500" cy="18.500" r="1.500" fill="#fff" stroke="#000"/><path d="M15 17H17V20H15ZM37 17H39V20H37ZM15 27H17V30H15ZM24 27H31V29H24Z"/></svg><span>Relay</span></div>
    <div class="tile"><svg width="52" height="36" class="px"><use href="#exp"/><path d="M23 11.500H28.500V17M23 27.500H35.500V23M27 15L28.500 17L30 15M34 25L35.500 23L37 25" fill="none" stroke="#000"/><g fill="#dff" stroke="#000080"><rect x="13.500" y="8.500" width="9" height="6"/><rect x="22.500" y="16.500" width="9" height="6"/><rect x="31.500" y="16.500" width="9" height="6" fill="#aac"/><rect x="13.500" y="24.500" width="9" height="6" fill="#aac"/></g><use href="#xx" x="14" y="9" width="8" height="5"/><use href="#xx" x="23" y="17" width="8" height="5"/><use href="#xx" x="32" y="17" width="8" height="5"/><use href="#xx" x="14" y="25" width="8" height="5"/></svg><span>Append Signals</span></div>

    <div class="tile"><svg width="52" height="36" class="px"><use href="#exp"/><path d="M14 8H18V15H14ZM21 8H29V15H21ZM32 8H40V15H32ZM14 24H40V33H14Z" fill="#ccc"/><path d="M14 11L17 9M21 9L24 13H28M32 13L35 10L40 9M14 29L20 25L25 28L31 29L39 25" fill="none" stroke="#000" stroke-width="1.300"/><path d="M17.500 16V22M27.500 16V22M36.500 16V22M22.500 8V10M22.500 28V33M31.500 24V30" stroke="#d00"/><path d="M15 19H20L17.500 23ZM25 19H30L27.500 23ZM34 19H39L36.500 23Z" fill="#d00"/></svg><span>Repack Values</span></div>
    <div class="tile"><svg width="52" height="36" class="px"><use href="#exp"/><path d="M14 11H20V30H14ZM31 11H40V30H31Z" fill="#ddd" stroke="#888"/><path d="M14 18L20 12M14 24L20 18M14 29L20 23M31 20L40 11M31 27L40 18" stroke="#777"/><path d="M20.500 10V31M31.500 10V31" stroke="#d00"/><path d="M16 30V27L19 29L22 22L23 14L24 28L27 25L29 29L32 26L35 29L39 28" fill="none" stroke="#000" stroke-width="1.300" stroke-linejoin="bevel"/><path d="M28 7L33 15M34 7L29 15" stroke="#000" stroke-width="1.200"/><circle cx="28" cy="6.500" r="1.300" fill="#fff" stroke="#000"/><circle cx="34" cy="6.500" r="1.300" fill="#fff" stroke="#000"/></svg><span>Extract Portion</span></div>
    <div class="tile"><svg width="52" height="36" class="px"><use href="#exp"/><path d="M15.500 11V31H40" fill="none" stroke="#777" stroke-dasharray="3 1"/><rect x="20.500" y="20.500" width="13" height="10" fill="#fff" stroke="#d00"/><path d="M16 29L19 27L22 24L26 25L29 22L32 25L36 26L39 29" fill="none" stroke="#000" stroke-width="1.600"/><rect x="32.500" y="8.500" width="6" height="10" fill="#fff" stroke="#000"/><path d="M33 9L38 18M38 9L33 18M31 8.500H40M31 18.500H40" stroke="#000"/></svg><span>Delay Values</span></div>

    <div class="tile"><svg width="52" height="36" class="px"><use href="#expframe"/><path d="M14 3.500H39L40.500 5V12L39 13.500H14L16 11V6Z" fill="#ffc" stroke="#000"/><use href="#xx" x="18" y="6" width="8" height="5"/><text class="micro" x="26" y="11" font-size="7.500" fill="#f60" font-weight="700" textLength="14" lengthAdjust="spacingAndGlyphs">[dbl]</text></svg><span>From DDT</span></div>
    <div class="tile"><svg width="52" height="36" class="px"><use href="#expframe"/><path d="M13 3.500H38L39.500 5V12L38 13.500H13L15 11V6Z" fill="#ffc" stroke="#000"/><use href="#xx" x="30" y="6" width="8" height="5"/><text class="micro" x="15" y="11" font-size="7.500" fill="#f60" font-weight="700" textLength="14" lengthAdjust="spacingAndGlyphs">[dbl]</text></svg><span>To DDT</span></div>
    <div class="tile"><svg width="52" height="36" class="px"><use href="#exp"/><path d="M18 7.500H16.500V10L15 11.500L16.500 13V16M18 20.500H16.500V24L15 26.500L16.500 28V31.500H18" fill="none" stroke="#000"/><g fill="none"><path d="M20 12.500H23.500V7.500H27.500V12.500H31.500V7.500H34.500V12.500H39" stroke="#f00"/><path d="M20 19.500H23.500V15.500H27.500V19.500H31.500V15.500H34.500V19.500H39" stroke="#5f0"/><path d="M20 26.500H23.500V22.500H27.500V26.500H31.500V22.500H34.500V26.500H39" stroke="#03d"/><path d="M20 32.500H23.500V28.500H27.500V32.500H31.500V28.500H34.500V32.500H39" stroke="#000"/></g></svg><span>Group Signals</span></div>

    <div class="tile"><svg width="52" height="36" class="px"><use href="#exp"/><rect x="15.500" y="9.500" width="11" height="10" fill="#fff" stroke="#000"/><path d="M17 12.500H25M17 14.500H25M17 16.500H25" stroke="#44b" stroke-dasharray="1 1 6 1"/><path d="M20 22V25L22 28H25" fill="none" stroke="#00f" stroke-width="2"/><path d="M24 24.500L29 28L24 31.500Z" fill="#00f"/><use href="#xx" x="31" y="26" width="8" height="5"/></svg><span>Set Attributes</span></div>
    <div class="tile"><svg width="52" height="36" class="px"><use href="#exp"/><rect x="27.500" y="20.500" width="11" height="10" fill="#fff" stroke="#000"/><path d="M29 23.500H37M29 25.500H37M29 27.500H37" stroke="#44b" stroke-dasharray="1 1 6 1"/><path d="M16 16V20L18 23H21" fill="none" stroke="#00f" stroke-width="2"/><path d="M20 19.500L25 23L20 26.500Z" fill="#00f"/><use href="#xx" x="15" y="9" width="8" height="5"/></svg><span>Get Attributes</span></div>
  </div>
</section>
</body>
</html>
```
FILE: styles.css
```css
* { box-sizing: border-box; }
html, body { margin: 0; height: 100%; }
body { position: relative; overflow: hidden; width: 1424px; height: 854px; background: #fff; color: #000; font: 12px/15px "Open Sans", "Noto Sans", sans-serif; letter-spacing: -.24px; }
svg { display: block; flex: none; }
svg text { stroke: none; }
.defs { position: absolute; }
.px { shape-rendering: crispEdges; }
.micro { font-family: "DejaVu Sans", sans-serif; letter-spacing: 0; }
.win { position: absolute; top: 0; height: 854px; display: flex; flex-direction: column; }

/* front panel */
.front { left: 767px; width: 657px; background: #f0f0f0; overflow: hidden; }
.front-title { height: 20px; background: #fff; display: flex; justify-content: flex-end; }
.front-bars { height: 46px; display: flex; border-bottom: 1px solid #696969; }
.bars-main { flex: 1; display: flex; flex-direction: column; }
.front-menu { height: 21px; border-bottom: 1px solid #a0a0a0; }
.front-tools { flex: 1; display: flex; align-items: center; justify-content: flex-end; border-top: 1px solid #fff; }
.front-icons { width: 56px; border-left: 1px solid #696969; padding: 6px 0 0 1px; display: flex; gap: 1px; overflow: hidden; }
.front-foot { height: 10px; background: #ededed; display: flex; }
.front-foot i { width: 417px; background: #cdcdcd; }
.under { height: 2px; border-top: 1px solid #888; background: linear-gradient(90deg, #ddd 73px, #8a3038 73px, #8a3038 200px, #ddd 200px, #ddd 228px, #3c3a34 228px, #4a5238 396px, #ddd 396px); }
.search { width: 131px; height: 19px; background: #fff; color: #6d6d6d; display: flex; align-items: center; justify-content: space-between; padding: 0 7px 0 2px; }
.search span { letter-spacing: -.45px; }

/* block diagram */
.block { left: 0; width: 768px; border-left: 2px solid #777; border-right: 1px solid #696969; background: #fff; box-shadow: 0 0 8px rgba(0,0,0,.25); }
.title { height: 32px; display: flex; align-items: center; padding: 0 7px 2px 10px; }
.title h1 { margin: 0 0 0 6px; font: inherit; letter-spacing: -.32px; }
.winctl { margin: 1px 0 0 auto; }
.bars { height: 46px; display: flex; background: #f0f0f0; border-bottom: 1px solid #696969; }
.menu { height: 21px; display: flex; align-items: center; gap: 13.500px; padding: 0 0 3px 7px; border-bottom: 1px solid #a0a0a0; }
.tools { flex: 1; display: flex; align-items: center; padding-left: 52px; border-top: 1px solid #fff; }
.combo { width: 146px; height: 20px; border: 1px solid #7a7a7a; display: flex; align-items: center; justify-content: space-between; padding: 0 4px 0 5px; }
.vi-icon { width: 35px; border-left: 1px solid #696969; padding: 6px 0 0 1px; }
.work { height: 764px; display: flex; }
.vscroll { width: 16px; background: #f0f0f0; display: flex; flex-direction: column; }
.vscroll i { margin-top: 103px; flex: 1; background: #cdcdcd; }
.hscroll { height: 12px; background: #f0f0f0; display: flex; }
.hscroll i { width: 520px; background: #cdcdcd; }

/* palettes */
.pal { position: absolute; display: flex; flex-direction: column; background: #f8f8f8; border: 1px solid #a0a0a0; box-shadow: 4px 4px 4px -1px rgba(0,0,0,.5); }
.pal header { height: 25px; display: flex; align-items: center; background: #dcdcdc; border-bottom: 1px solid #c8c8c8; padding: 5px 0 0 14px; }
.pal header span { margin-left: 11px; }
.functions { left: 351px; top: 93px; width: 332px; height: 756px; }
.functions header { height: 23px; padding: 3px 0 0 10px; }
.functions button { margin-left: auto; width: 64px; height: 19px; border: 0; padding: 0 0 0 4px; background: #f8f8f8; font: inherit; letter-spacing: -.6px; display: flex; align-items: center; gap: 2px; }
.cat { height: 21px; margin: 0 1px; background: #dcdcdc; display: flex; justify-content: space-between; padding: 0 3px 4px 6px; }
.cat i { border-left: 6px solid #000; border-top: 6px solid transparent; border-bottom: 6px solid transparent; height: 12px; margin-top: 3px; }
.cat.on { background: #0078d7; color: #fff; }
.cat.on i { border-left-color: #fff; }
.tiles { display: grid; grid-template-columns: repeat(3, 104px); grid-auto-rows: 78px; padding: 8px 0 0 3px; }
.functions .tiles { height: 478px; }
.tile { display: flex; flex-direction: column; align-items: center; text-align: center; padding-top: 3px; white-space: nowrap; }
.tile > span { margin-top: 4px; margin-left: -1px; }
.cats { flex: 1; margin-bottom: 2px; background: #dcdcdc; }
.more { margin: 5px 0 0 161px; }
.express { left: 676px; top: 643px; width: 418px; height: 206px; }
.hint { margin: 0 0 1px 10px; height: 15px; text-align: center; }
.tiles.four { grid-template-columns: repeat(4, 104px); padding: 0 0 0 1px; }
.sel { width: 96px; height: 79px; justify-self: center; outline: 1px solid #0078d7; outline-offset: -1px; }
.sigman { left: 1093px; top: 331px; width: 326px; height: 518px; }
.sigman .hint { margin-left: -3px; }
.tiles.xp { padding: 0; }
.xp .tile { padding-top: 6px; }
.xp .tile > span { margin-top: 5px; margin-left: 0; }
.xp .sel { margin-left: 2px; }
.xp .sel svg { margin-left: -2px; }
```
